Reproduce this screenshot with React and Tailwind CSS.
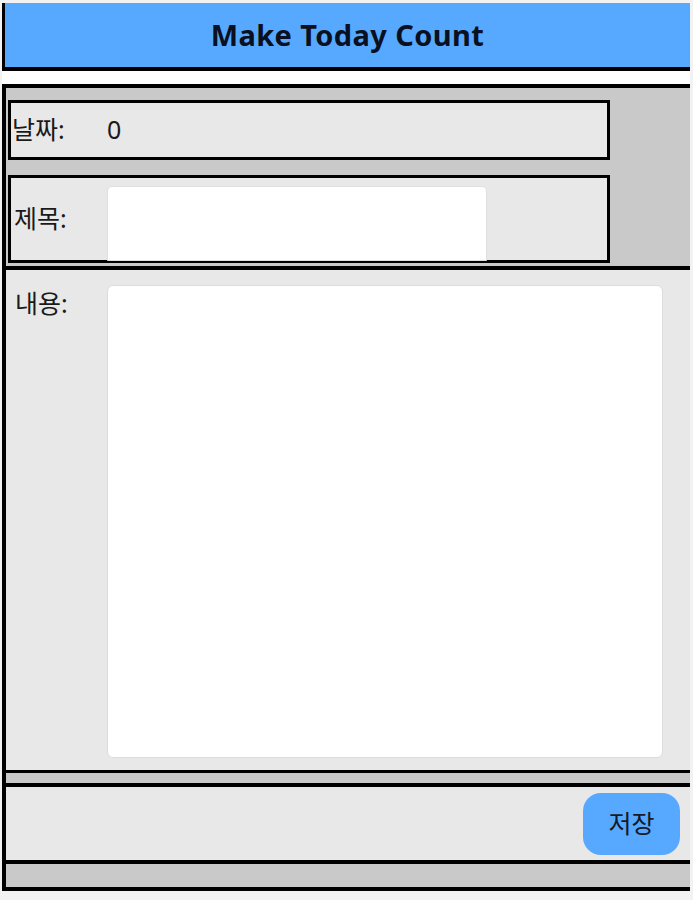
import React, { useState } from 'react';

const font = { fontFamily: '"Noto Sans", "Noto Sans CJK KR", sans-serif' };

export default function App() {
  const [title, setTitle] = useState('');
  const [content, setContent] = useState('');

  return (
    <div
      className="w-[693px] h-[900px] bg-[#f2f2f2] pt-[3px] pl-[2px] pr-[3px] text-[#1a1a1a]"
      style={font}
    >
      <header className="h-[68px] bg-[#56a9ff] border-l-[3px] border-b-[4px] border-black flex items-center justify-center pb-[1px]">
        <h1 className="text-[29px] font-bold text-[#0a1020] tracking-[0.4px]">Make Today Count</h1>
      </header>

      <div className="h-[13px] bg-white" />

      <section className="bg-[#c9c9c9] border-t-[4px] border-l-[4px] border-b-[4px] border-black pt-[12px] pb-[3px] pl-[2px]">
        <div className="w-[602px] h-[60px] border-[3px] border-black bg-[#e8e8e8] flex items-center">
          <span className="w-[96px] pl-[1px] text-[25px]">날짜:</span>
          <span className="text-[25px]">0</span>
        </div>
        <div className="mt-[15px] w-[602px] h-[88px] border-[3px] border-black bg-[#e8e8e8] flex items-center">
          <span className="w-[96px] pl-[3px] text-[25px]">제목:</span>
          <input
            value={title}
            onChange={(e) => setTitle(e.target.value)}
            className="w-[380px] h-[75px] mt-[8px] bg-white rounded-t-[5px] border border-[#e0e0e0] outline-none"
          />
        </div>
      </section>

      <section className="h-[503px] bg-[#e8e8e8] border-l-[4px] border-b-[3px] border-black flex pt-[15px] pr-[27px]">
        <span className="w-[101px] pl-[9px] text-[25px] leading-[36px]">내용:</span>
        <textarea
          value={content}
          onChange={(e) => setContent(e.target.value)}
          className="flex-1 h-[473px] bg-white rounded-[6px] border border-[#dcdcdc] resize-none outline-none"
        />
      </section>

      <div className="h-[10px] bg-[#c9c9c9] border-l-[4px] border-black" />

      <section className="h-[81px] bg-[#e8e8e8] border-l-[4px] border-t-[4px] border-b-[4px] border-black flex items-center justify-end pr-[10px]">
        <button className="w-[97px] h-[62px] rounded-[18px] bg-[#56a9ff] text-[25px] text-[#141a28]">
          저장
        </button>
      </section>

      <div className="h-[27px] bg-[#c9c9c9] border-l-[4px] border-b-[4px] border-black" />
    </div>
  );
}
